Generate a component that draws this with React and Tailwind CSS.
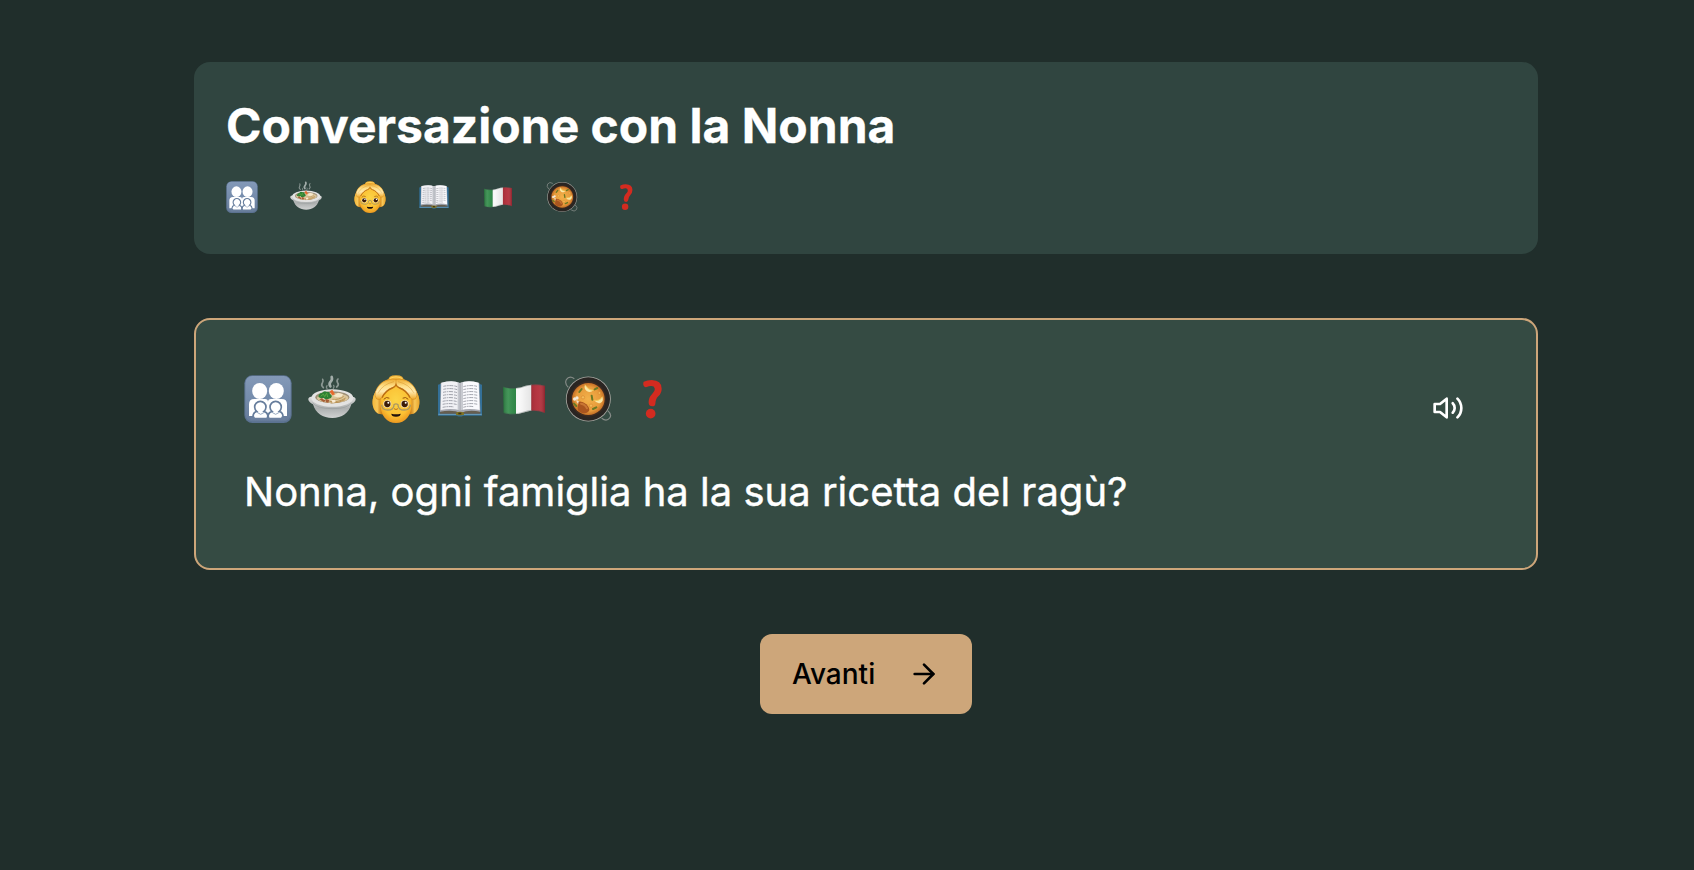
import React from "react";

function Family() {
  return (
    <>
      <defs>
        <linearGradient id="tile" x1="0" y1="0" x2="0" y2="1">
          <stop offset="0" stopColor="#8399b8" />
          <stop offset="0.5" stopColor="#758cac" />
          <stop offset="1" stopColor="#667b99" />
        </linearGradient>
      </defs>
      <rect x="1" y="1" width="142" height="143" rx="24" fill="#5b7291" />
      <rect x="4" y="3" width="136" height="136" rx="21" fill="url(#tile)" />
      <g fill="#fff">
        <ellipse cx="47" cy="48" rx="22.5" ry="24" />
        <ellipse cx="97" cy="48" rx="22.5" ry="24" />
        <path d="M15 123V88q0-16 16-16h32q9 0 9 9 0-9 9-9h32q16 0 16 16v35z" />
      </g>
      <g fill="#fff" stroke="#667d9c" strokeWidth="5">
        <path d="M27 128q-1-16 11-19a17 17 0 1 1 22 0q12 3 12 19z" />
        <path d="M72 128q0-16 12-19a17 17 0 1 1 22 0q12 3 11 19z" />
      </g>
      <path d="M20 127h104v7H20z" fill="#6c819f" />
      <path d="M32 128q0-13 10-15l8 8 8-8q9 2 10 15zM76 128q0-13 10-15l8 8 8-8q9 2 10 15z" fill="#fff" />
      <path d="M39 112l11 6 11-6M84 112l11 6 11-6" fill="none" stroke="#8297b3" strokeWidth="2.5" />
    </>
  );
}

function Bowl() {
  return (
    <>
      <defs>
        <linearGradient id="bowl" x1="0" y1="0" x2="0" y2="1">
          <stop offset="0" stopColor="#dcdddd" />
          <stop offset="0.55" stopColor="#adb0b0" />
          <stop offset="1" stopColor="#d0d2d2" />
        </linearGradient>
        <filter id="steam" x="-20%" y="-20%" width="140%" height="140%">
          <feGaussianBlur stdDeviation="1.5" />
        </filter>
      </defs>
      <g fill="none" stroke="#dfe4e2" strokeLinecap="round" filter="url(#steam)">
        <path d="M46 38q-8-7-3-14 4-6 1-11" strokeWidth="5" opacity="0.5" />
        <path d="M67 34q-5-7 1-14 6-6 3-14" strokeWidth="8" opacity="0.65" />
        <path d="M86 36q8-7 3-13-4-6 1-11" strokeWidth="5" opacity="0.5" />
        <path d="M57 41q-4-5 0-9M76 40q4-5 1-9" strokeWidth="4" opacity="0.45" />
      </g>
      <path d="M10 65Q0 66 1 74q1 6 14 14c8 27 29 41 58 41s49-14 57-41q13-7 13-15 0-8-11-8z" fill="url(#bowl)" />
      <ellipse cx="73" cy="69" rx="63" ry="26" fill="#e3e3e2" />
      <path d="M14 83q12 18 59 18t58-18" fill="none" stroke="#8d9393" strokeWidth="2" opacity="0.7" />
      <ellipse cx="73" cy="67" rx="51" ry="18" fill="#9e8f78" />
      <ellipse cx="74" cy="69" rx="47" ry="15" fill="#dac69c" />
      <path d="M64 79q26 5 49-10M73 73q21 2 34-9M68 84q25 1 43-10" fill="none" stroke="#b68a48" strokeWidth="2.5" />
      <path d="M76 63l14-10 15 4-4 8-13 2z" fill="#f5e7ca" />
      <path d="M65 49l8-5 8 14-8 3z" fill="#e8692d" />
      <path d="M31 66q1-11 11-12 6-9 15-3 8-2 9 6 9 5 3 12-17 8-30 1z" fill="#2d8034" />
      <path d="M38 64l8-7 4 8 6-11 3 12" fill="none" stroke="#57a541" strokeWidth="3" />
      <path d="M34 73l10-4 9 7-5 6zM54 72l10 3-3 8-8-1z" fill="#a65e37" />
      <path d="M42 71l6-2 4 6zM70 75l11-1 2 7-9 3z" fill="#f8ead2" />
    </>
  );
}

function Grandma() {
  return (
    <>
      <defs>
        <linearGradient id="hair" x1="0" y1="0" x2="0" y2="1">
          <stop offset="0" stopColor="#f5bb40" />
          <stop offset="0.5" stopColor="#e7a22c" />
          <stop offset="1" stopColor="#c97b17" />
        </linearGradient>
        <linearGradient id="side">
          <stop offset="0" stopColor="#f3b83c" />
          <stop offset="0.1" stopColor="#f8c757" />
          <stop offset="0.2" stopColor="#c97d14" stopOpacity="0.6" />
          <stop offset="0.8" stopColor="#c97d14" stopOpacity="0.6" />
          <stop offset="0.9" stopColor="#f8c757" />
          <stop offset="1" stopColor="#e8a52c" />
        </linearGradient>
        <radialGradient id="face" cx="0.5" cy="0.4" r="0.65">
          <stop offset="0" stopColor="#fbd447" />
          <stop offset="0.65" stopColor="#fbc033" />
          <stop offset="1" stopColor="#e98f1b" />
        </radialGradient>
        <linearGradient id="fringe" x1="0" y1="0" x2="0" y2="1">
          <stop offset="0" stopColor="#edab30" />
          <stop offset="0.35" stopColor="#ffe08a" />
          <stop offset="0.6" stopColor="#ffe9ae" />
          <stop offset="1" stopColor="#f0ab2c" />
        </linearGradient>
      </defs>
      <path d="M50 18Q46 1 72 1t22 17z" fill="#efaf33" />
      <path d="M55 10q17-9 34 0" fill="none" stroke="#ffd565" strokeWidth="4" strokeLinecap="round" />
      <path d="M72 10C38 10 18 27 11 49 1 66 0 84 4 97c4 15 17 24 32 20h72c15 4 28-5 32-20 4-13 3-31-7-48-7-22-27-39-61-39z" fill="url(#hair)" />
      <path d="M11 49C1 66 0 84 4 97c4 15 17 24 32 20h72c15 4 28-5 32-20 4-13 3-31-7-48z" fill="url(#side)" />
      <path d="M25 84c0-36 16-54 47-54s47 18 47 54c0 38-19 60-47 60S25 122 25 84z" fill="url(#face)" />
      <path d="M72 13C42 9 19 26 10 51q-3 13 4 21 11 4 16-5c7-14 17-24 31-29q9-3 11-10 2 7 11 10c14 5 24 15 31 29q5 9 16 5 7-8 4-21C125 26 102 9 72 13z" fill="url(#fringe)" stroke="#cd8118" strokeWidth="1.5" />
      <path d="M30 68c7-14 17-24 31-29q9-3 11-10 2 7 11 10c14 5 24 15 31 29" fill="none" stroke="#bd6e12" strokeWidth="4" />
      <path d="M72 12v19M19 53Q32 28 66 20M125 53Q112 28 78 20" fill="none" stroke="#d18a20" strokeWidth="2" opacity="0.65" />
      <path d="M36 72q7-8 15-3M93 69q8-5 15 3" fill="none" stroke="#98530e" strokeWidth="3" strokeLinecap="round" />
      <ellipse cx="46" cy="87" rx="12" ry="11" fill="#f5e6ca" />
      <ellipse cx="98" cy="87" rx="12" ry="11" fill="#f5e6ca" />
      <circle cx="46" cy="87" r="9.5" fill="#3c1d08" />
      <circle cx="98" cy="87" r="9.5" fill="#3c1d08" />
      <circle cx="49" cy="83" r="3" fill="#fff" />
      <circle cx="101" cy="83" r="3" fill="#fff" />
      <g fill="none" stroke="#aa9863" strokeWidth="4">
        <path d="M29 89q1 16 18 16 19 0 19-16 6-5 12 0 0 16 19 16 17 0 18-16" />
      </g>
      <path d="M66 101q6 5 12 0" fill="none" stroke="#bd7417" strokeWidth="3" />
      <path d="M58 116q14 3 28 0 0 9-14 9t-14-9z" fill="#20120c" />
    </>
  );
}

function Book() {
  return (
    <>
      <path d="M6 29l7-2h118l7 2v93H82q-10 5-20 0H6z" fill="#347098" />
      <path d="M7 116h130v4H7z" fill="#6398b7" />
      <path d="M12 111l8-5h104l9 5v5H83q-11 6-22 0H12z" fill="#655e50" />
      <path d="M14 24q35-10 56 0 24-10 60 0l3 86q-36-7-59 4-23-11-62-4z" fill="#a6a8b0" />
      <path d="M16 23q36-9 55 1v82q-24-8-57-1z" fill="#f1f1f5" />
      <path d="M128 23q-34-9-54 1v82q24-8 57-1z" fill="#fafafd" />
      <path d="M65 22q7 0 7 5 1-5 9-5v83q-8 0-9 4-1-4-7-4z" fill="#aeb0b8" opacity="0.65" />
      <g fill="none" stroke="#8c8e98" strokeWidth="2.4" strokeDasharray="9 2 5 2 12 3">
        <path d="M22 34q23-5 42 1M22 43q23-5 42 1M21 52q23-5 43 1M21 61q23-5 43 1M21 70q23-5 43 1M20 79q23-5 44 1M20 88q23-5 44 1M20 97q20-4 34-1" />
        <path d="M82 35q21-6 41-1M82 44q21-6 41-1M82 53q21-6 42-1M82 62q21-6 42-1M82 71q21-6 42-1M82 80q21-6 43-1M82 89q21-6 43-1M82 97q15-5 30-2" />
      </g>
      <path d="M60 113q12-5 24 0v6q-12 4-24 0z" fill="#807323" />
      <path d="M67 113h9v5h-9z" fill="#3c3315" />
    </>
  );
}

function Flag() {
  return (
    <>
      <defs>
        <linearGradient id="wave">
          <stop offset="0" stopColor="#000" stopOpacity="0.2" />
          <stop offset="0.13" stopColor="#fff" stopOpacity="0.1" />
          <stop offset="0.38" stopColor="#000" stopOpacity="0.02" />
          <stop offset="0.65" stopColor="#000" stopOpacity="0.1" />
          <stop offset="0.85" stopColor="#fff" stopOpacity="0.05" />
          <stop offset="1" stopColor="#000" stopOpacity="0.22" />
        </linearGradient>
      </defs>
      <path d="M9 35q20 7 40 4v78q-20 3-38-3z" fill="#2f8a47" />
      <path d="M48 39c17-1 30-10 47-10v78c-17 1-30 10-47 10z" fill="#fff" />
      <path d="M94 29q22-2 41 3v82q-18-8-41-7z" fill="#b32d39" />
      <path d="M9 35q20 7 40 4c17-1 30-10 46-10q21-2 40 3v82q-18-8-41-7c-17 1-30 10-46 10q-20 3-37-3z" fill="url(#wave)" />
      <path d="M10 36q20 6 39 4c17-1 30-10 46-10q21-2 39 3M11 113q19 6 38 3c16-1 29-9 45-10q23-1 40 7" fill="none" stroke="#45524d" strokeWidth="2" opacity="0.5" />
    </>
  );
}

function Pan() {
  return (
    <>
      <defs>
        <radialGradient id="curry">
          <stop offset="0" stopColor="#f2b14a" />
          <stop offset="0.75" stopColor="#e79b3b" />
          <stop offset="1" stopColor="#c56f25" />
        </radialGradient>
      </defs>
      <path d="M13 37Q1 25 7 14q9-13 24-3M131 107q14 12 6 22-9 12-24 1" fill="none" stroke="#858b87" strokeWidth="3.5" />
      <circle cx="73" cy="72" r="67.5" fill="#a7a6a0" />
      <circle cx="73" cy="72" r="65" fill="#2a2522" />
      <circle cx="73" cy="72" r="53" fill="#3d2a20" />
      <ellipse cx="73" cy="72" rx="49" ry="48" fill="url(#curry)" />
      <path d="M63 29q9 16 25 17-9 9-20 2-9-8-5-19z" fill="#fae8a6" />
      <path d="M91 76q16 3 24-11 5 14-6 19-11 3-18-8z" fill="#fae8a6" />
      <path d="M63 29q9 16 25 17M91 76q16 3 24-11" fill="none" stroke="#f3cd58" strokeWidth="3" />
      <g stroke="#6b7a24" strokeWidth="6" strokeLinecap="round">
        <path d="M46 51l7-9M83 62l2 12M92 43l8-4M30 86l7 7M87 102l10-5" />
      </g>
      <g fill="#f3bb58" stroke="#d98a30" strokeWidth="2">
        <circle cx="57" cy="67" r="5" /><circle cx="106" cy="54" r="4" /><circle cx="81" cy="92" r="5" />
      </g>
      <path d="M37 74l19 13-7 9-11-15z" fill="#eee0c9" />
      <circle cx="32" cy="72" r="5" fill="#f2eadb" /><circle cx="39" cy="69" r="5" fill="#f2eadb" />
      <path d="M44 80q10-3 23 8 12 12 8 20-8 10-23 5-14-5-11-19z" fill="#a9551f" />
      <path d="M51 86q13 2 18 14" fill="none" stroke="#c87634" strokeWidth="6" strokeLinecap="round" />
    </>
  );
}

function Question() {
  return (
    <>
      <path d="M47 20q11-5 24-5 30 1 30 26 0 13-10 23-8 7-9 22-1 8-9 8-10 0-11-10c0-12 2-18 11-28q9-9 7-16-2-8-11-7-6 0-13 3-8 2-10-6-1-7 1-10z" fill="#d32b20" />
      <circle cx="68" cy="116" r="14.5" fill="#d32b20" />
    </>
  );
}

const topics = [
  ["famiglia", Family],
  ["zuppa", Bowl],
  ["nonna", Grandma],
  ["libro", Book],
  ["Italia", Flag],
  ["padella", Pan],
  ["domanda", Question],
];

function Emojis({ rowClass, iconClass }) {
  return (
    <div className={rowClass}>
      {topics.map(([name, Art]) => (
        <svg key={name} viewBox="0 0 144 144" className={iconClass} aria-hidden="true">
          <Art />
        </svg>
      ))}
    </div>
  );
}

export default function App() {
  return (
    <main className="flex min-h-screen flex-col items-center gap-16 bg-[#202e2b] pt-[62px] pr-[156px] pl-[194px] font-['Inter',sans-serif] text-white">
      <header className="flex h-48 w-full flex-col gap-4 rounded-2xl bg-[#304540] p-8">
        <h1 className="text-[48px] leading-[64px] font-bold [-webkit-text-stroke:0.3px]">Conversazione con la Nonna</h1>
        <Emojis rowClass="flex h-[46px] items-center gap-8" iconClass="size-8 shrink-0" />
      </header>

      <section className="flex w-full items-start justify-between rounded-2xl border-2 border-[#cda67a] bg-[#354b43] p-12">
        <div className="flex flex-col gap-8">
          <Emojis rowClass="flex h-16 items-center gap-4 pb-0.5" iconClass="size-12 shrink-0" />
          <p className="text-[40px] leading-[56px] [-webkit-text-stroke:0.4px]">Nonna, ogni famiglia ha la sua ricetta del ragù?</p>
        </div>
        <button className="flex size-20 items-center justify-center">
          <svg className="size-8" viewBox="0 0 24 24" fill="none" stroke="currentColor" strokeWidth="2" strokeLinecap="round" strokeLinejoin="round">
            <polygon points="11 5 6 9 2 9 2 15 6 15 11 19 11 5" />
            <path d="M15.54 8.46a5 5 0 0 1 0 7.07" />
            <path d="M19.07 4.93a10 10 0 0 1 0 14.14" />
          </svg>
        </button>
      </section>

      <button className="flex h-20 w-[212px] items-center justify-between rounded-xl bg-[#cda67a] px-8 text-[28px] leading-10 font-medium text-black">
        Avanti
        <svg className="size-8" viewBox="0 0 24 24" fill="none" stroke="currentColor" strokeWidth="2" strokeLinecap="round" strokeLinejoin="round">
          <path d="M5 12h14" />
          <path d="m12 5 7 7-7 7" />
        </svg>
      </button>
    </main>
  );
}
